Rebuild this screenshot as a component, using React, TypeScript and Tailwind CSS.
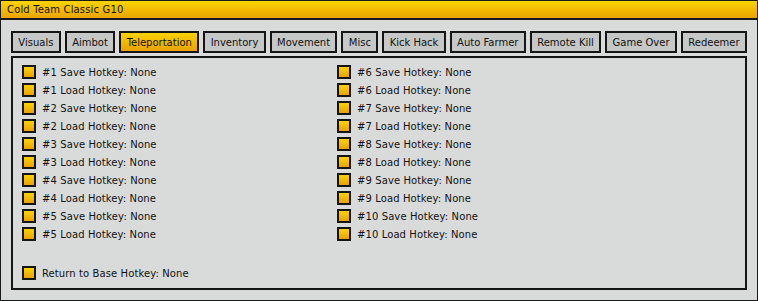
import React from 'react';

const tabs = ['Visuals', 'Aimbot', 'Teleportation', 'Inventory', 'Movement', 'Misc', 'Kick Hack', 'Auto Farmer', 'Remote Kill', 'Game Over', 'Redeemer'];

const left = [1, 2, 3, 4, 5].flatMap(n => [`#${n} Save Hotkey: None`, `#${n} Load Hotkey: None`]);
const right = [6, 7, 8, 9, 10].flatMap(n => [`#${n} Save Hotkey: None`, `#${n} Load Hotkey: None`]);

const Check: React.FC<{ label: string }> = ({ label }) => (
  <div className="flex items-center h-[18px]">
    <div className="w-[14px] h-[14px] border-2 border-[#151515] bg-gradient-to-b from-[#fbd300] to-[#e9a300]" />
    <span className="ml-[6px] text-[10px] text-[#111] tracking-[0.1px]">{label}</span>
  </div>
);

const App: React.FC = () => {
  return (
    <div className="w-[758px] h-[301px] bg-[#d9dbda] border border-[#1a1a1a] flex flex-col" style={{ fontFamily: '"DejaVu Sans", Verdana, sans-serif' }}>
      {/* Title bar */}
      <div className="h-[19px] shrink-0 bg-gradient-to-b from-[#fad400] to-[#eba400] border-b-2 border-[#1a1a1a] flex items-center pl-[6px]">
        <span className="text-[10px] text-[#111] tracking-[0.15px]">Cold Team Classic G10</span>
      </div>

      <div className="flex-1 flex flex-col px-[10px] pt-[11px] pb-[10px]">
        {/* Tabs */}
        <div className="flex gap-[4px] h-[22px]">
          {tabs.map(t => (
            <div
              key={t}
              className={`flex-auto flex items-center justify-center border-2 border-[#151515] text-[10px] text-[#111] px-[5px] ${t === 'Teleportation' ? 'bg-gradient-to-b from-[#fbd200] to-[#e9a200]' : 'bg-[#c6c8c7]'}`}
            >
              {t}
            </div>
          ))}
        </div>

        {/* Panel */}
        <div className="flex-1 mt-[3px] border-2 border-[#151515] pl-[9px] pt-[5px] flex flex-col">
          <div className="flex">
            <div className="w-[315px] flex flex-col">
              {left.map(l => <Check key={l} label={l} />)}
            </div>
            <div className="flex flex-col">
              {right.map(l => <Check key={l} label={l} />)}
            </div>
          </div>
          <div className="mt-[21px]">
            <Check label="Return to Base Hotkey: None" />
          </div>
        </div>
      </div>
    </div>
  );
};

export default App;
